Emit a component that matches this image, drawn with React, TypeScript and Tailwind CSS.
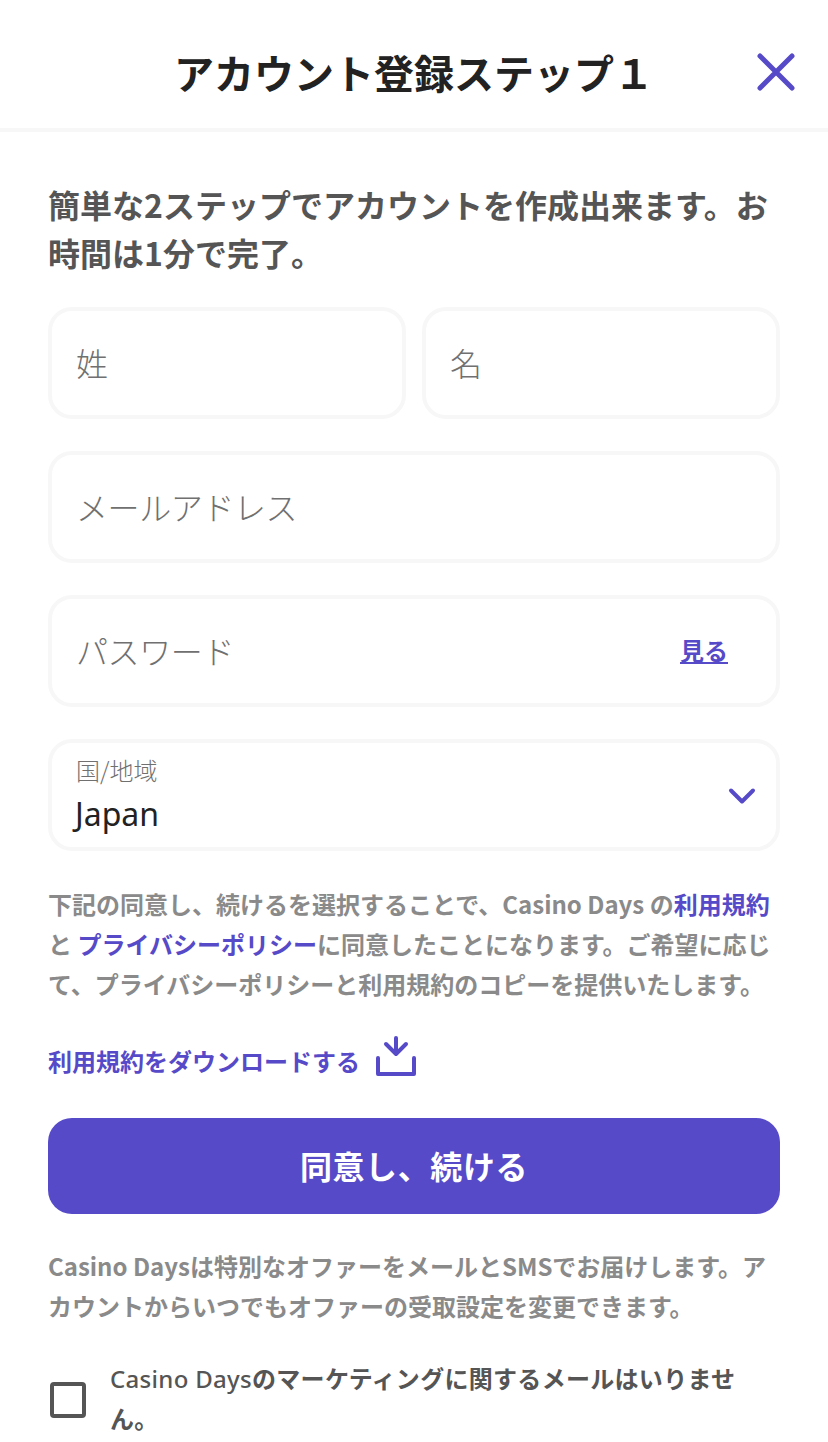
import React, { useState } from 'react';

interface FieldProps {
  label: string;
  type?: string;
  children?: React.ReactNode;
}

const Field: React.FC<FieldProps> = ({ label, type = 'text', children }) => (
  <div className="flex h-28 w-full min-w-0 items-center rounded-[24px] border-4 border-[#f7f7f7] bg-white pl-6 pr-12">
    <input
      type={type}
      placeholder={label}
      aria-label={label}
      className="mb-[3px] h-12 min-w-0 flex-1 text-[32px] font-light tracking-[-0.4px] placeholder:text-[#707070] focus:outline-none"
    />
    {children}
  </div>
);

const App: React.FC = () => {
  const [showPassword, setShowPassword] = useState(false);
  const [optOut, setOptOut] = useState(false);

  return (
    <div className="h-[1442px] w-[828px] overflow-hidden bg-white font-['Noto_Sans_CJK_JP',sans-serif] text-[#222]">
      <header className="flex h-[132px] items-center border-b-4 border-[#f7f7f7] pl-[174px] pr-[32px] pt-[16px]">
        <h1 className="flex-1 whitespace-nowrap text-[40px] font-bold leading-[60px]">アカウント登録ステップ１</h1>
        <button aria-label="Close" className="text-[#564ac8]">
          <svg width="40" height="40" viewBox="0 0 40 40" fill="none" stroke="currentColor" strokeWidth="5" strokeLinecap="round">
            <path d="M4 4L36 36M36 4L4 36" />
          </svg>
        </button>
      </header>

      <main className="px-12 pt-[48px]">
        <p className="whitespace-nowrap text-[32px] font-bold leading-[48px] text-[#555]">
          簡単な2ステップでアカウントを作成出来ます。お
          <br />
          時間は1分で完了。
        </p>

        <form className="mt-[31px] flex flex-col gap-8" onSubmit={(e) => e.preventDefault()}>
          <div className="grid grid-cols-2 gap-4">
            <Field label="姓" />
            <Field label="名" />
          </div>
          <Field label="メールアドレス" type="email" />
          <Field label="パスワード" type={showPassword ? 'text' : 'password'}>
            <button
              type="button"
              onClick={() => setShowPassword(!showPassword)}
              className="mb-[2px] text-[24px] font-bold text-[#564ac8] underline"
            >
              見る
            </button>
          </Field>
          <div className="flex h-28 items-center rounded-[24px] border-4 border-[#f7f7f7] pl-6 pr-5 pt-[2px]">
            <div className="flex-1">
              <div className="-mt-[2px] pb-[2px] text-[24px] font-light leading-[36px] text-[#707070]">国/地域</div>
              <div className="-ml-px font-['Noto_Sans',sans-serif] text-[32px] leading-[48px]">Japan</div>
            </div>
            <svg width="28" height="18" viewBox="0 0 28 18" fill="none" stroke="#564ac8" strokeWidth="4" strokeLinecap="round" strokeLinejoin="round">
              <path d="M3 3.5L14 14.5L25 3.5" />
            </svg>
          </div>
        </form>

        <p className="mt-[33px] whitespace-nowrap text-[24px] font-bold leading-[40px] text-[#8a8a8a]">
          下記の同意し、続けるを選択することで、Casino Days の<a className="text-[#564ac8]">利用規約</a>
          <br />
          と <a className="text-[#564ac8]">プライバシーポリシー</a>に同意したことになります。ご希望に応じ
          <br />
          て、プライバシーポリシーと利用規約のコピーを提供いたします。
        </p>

        <a className="mt-[31px] flex h-[42px] items-center gap-[15px] text-[24px] font-bold text-[#564ac8]">
          <span className="pt-[10px]">利用規約をダウンロードする</span>
          <svg width="42" height="42" viewBox="0 0 42 42" fill="none" stroke="currentColor" strokeWidth="4" strokeLinecap="round" strokeLinejoin="round">
            <path d="M3 23V39H39V23M21 3V18M11 9L21 19L31 9" />
          </svg>
        </a>

        <button className="mt-[41px] h-24 w-full rounded-[24px] bg-[#564ac8] pb-[3px] text-[32px] font-bold tracking-[0.6px] text-white">
          同意し、続ける
        </button>

        <p className="mt-[32px] whitespace-nowrap text-[24px] font-bold leading-[40px] text-[#8a8a8a]">
          Casino Daysは特別なオファーをメールとSMSでお届けします。ア
          <br />
          カウントからいつでもオファーの受取設定を変更できます。
        </p>

        <label className="mt-[33px] flex items-center gap-6 text-[24px] font-bold leading-[40px] text-[#555]">
          <input
            type="checkbox"
            checked={optOut}
            onChange={(e) => setOptOut(e.target.checked)}
            className="ml-[2px] mt-[2px] size-9 appearance-none rounded-[4px] border-4 border-[#555] checked:bg-[#564ac8]"
          />
          <span className="whitespace-nowrap font-['Noto_Sans','Noto_Sans_CJK_JP',sans-serif] tracking-[0.3px]">
            <span className="font-medium">Casino Days</span>のマーケティングに関するメールはいりませ
            <br />
            ん。
          </span>
        </label>
      </main>
    </div>
  );
};

export default App;
